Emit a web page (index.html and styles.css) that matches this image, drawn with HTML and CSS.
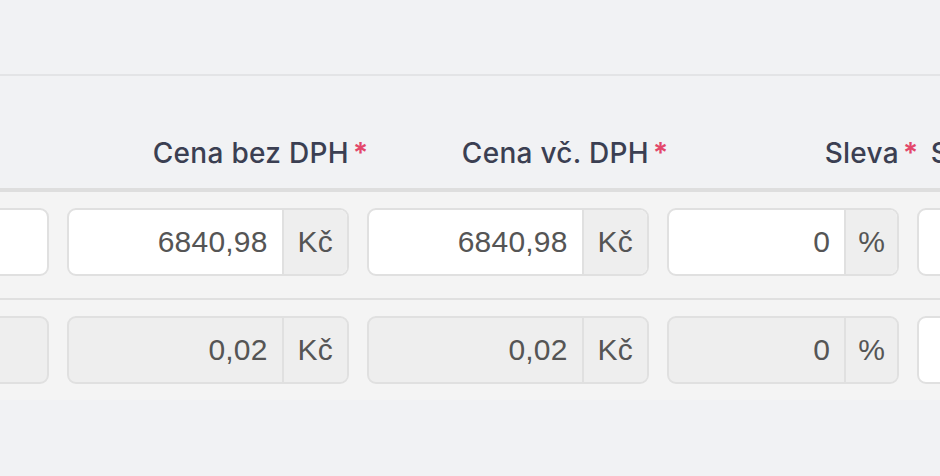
FILE: index.html
```html
<!DOCTYPE html>
<html lang="cs">
<head>
<meta charset="utf-8">
<title>Položky</title>
<link rel="stylesheet" href="styles.css">
</head>
<body>
<div class="page">
  <div class="topbar"></div>
  <div class="table">
    <div class="row head">
      <div class="cell"></div>
      <div class="cell"><span class="label req">Cena bez DPH</span></div>
      <div class="cell"><span class="label req">Cena vč. DPH</span></div>
      <div class="cell"><span class="label req">Sleva</span></div>
      <div class="cell"><span class="label req">Sazba DPH</span></div>
    </div>
    <div class="row body first">
      <div class="cell"><div class="input"><span class="field"></span></div></div>
      <div class="cell"><div class="input"><span class="field">6840,98</span><span class="addon">Kč</span></div></div>
      <div class="cell"><div class="input"><span class="field">6840,98</span><span class="addon">Kč</span></div></div>
      <div class="cell"><div class="input"><span class="field">0</span><span class="addon pct">%</span></div></div>
      <div class="cell"><div class="input"><span class="field"></span></div></div>
    </div>
    <div class="row body">
      <div class="cell"><div class="input disabled"><span class="field"></span></div></div>
      <div class="cell"><div class="input disabled"><span class="field">0,02</span><span class="addon">Kč</span></div></div>
      <div class="cell"><div class="input disabled"><span class="field">0,02</span><span class="addon">Kč</span></div></div>
      <div class="cell"><div class="input disabled"><span class="field">0</span><span class="addon pct">%</span></div></div>
      <div class="cell"><div class="input"><span class="field"></span></div></div>
    </div>
  </div>
</div>
</body>
</html>
```
FILE: styles.css
```css
html, body {
  margin: 0;
  padding: 0;
  background: #f1f2f4;
}
.page {
  width: 940px;
  height: 476px;
  overflow: hidden;
  background: #f1f2f4;
}
.topbar {
  height: 74px;
  border-bottom: 2px solid #e3e4e6;
}
.table {
  margin-left: -200px;
  width: 1300px;
}
.row {
  display: grid;
  grid-template-columns: 258px 300px 300px 250px 184px;
}
.head {
  height: 112px;
  border-bottom: 4px solid #dedede;
  box-sizing: content-box;
  align-items: end;
}
.head .cell {
  text-align: right;
  padding: 0 9px 18px;
  font-family: "Inter", "Noto Sans", sans-serif;
  font-weight: 500;
  font-size: 28px;
  line-height: 34px;
  color: #3b3f52;
  letter-spacing: 0.3px;
}
.label {
  position: relative;
  display: inline-block;
}
.label.req::after {
  content: "*";
  position: absolute;
  left: 100%;
  top: 0;
  padding-left: 4px;
  color: #e3476a;
  font-weight: 600;
}
.body {
  background: #f4f4f4;
  padding: 16px 0 16px;
}
.body.first {
  padding-bottom: 22px;
  border-bottom: 2px solid #e0e0e0;
}
.body .cell {
  padding: 0 9px;
}
.input {
  display: flex;
  height: 68px;
  box-sizing: border-box;
  border: 2px solid #e0e0e0;
  border-radius: 9px;
  background: #ffffff;
  overflow: hidden;
  font-family: "Liberation Sans", Arial, sans-serif;
  font-size: 30px;
  letter-spacing: 0.2px;
  color: #555555;
}
.input.disabled {
  background: #eeeeee;
}
.field {
  flex: 1;
  display: flex;
  align-items: center;
  justify-content: flex-end;
  padding: 0 14px;
}
.addon {
  display: flex;
  align-items: center;
  padding: 0 14px;
  background: #eeeeee;
  border-left: 2px solid #e0e0e0;
}
.addon.pct {
  padding: 0 12px;
}
```
